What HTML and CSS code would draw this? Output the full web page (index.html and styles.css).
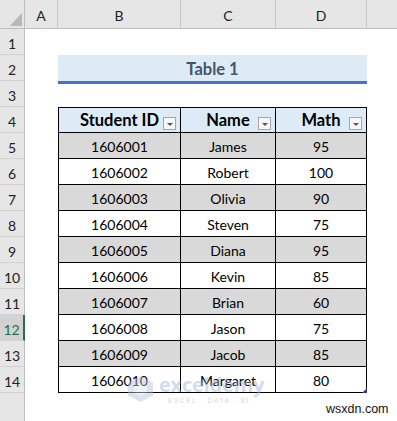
FILE: index.html
```html
<!DOCTYPE html>
<html>
<head>
<meta charset="utf-8">
<link rel="stylesheet" href="styles.css">
</head>
<body>
<div class="sheet">
  <div class="corner"><svg width="25" height="29" viewBox="0 0 25 29"><polygon points="10,26 22,26 22,13" fill="#b7b7b7"/></svg></div>
  <div class="ch">A</div>
  <div class="ch">B</div>
  <div class="ch">C</div>
  <div class="ch">D</div>
  <div class="ch last"></div>

  <div class="rh">1</div><div class="c"></div><div class="c"></div><div class="c"></div><div class="c"></div><div class="c"></div>
  <div class="rh">2</div><div class="c"></div><div class="title-cell"><div class="title">Table 1</div></div><div class="c"></div>
  <div class="rh">3</div><div class="c"></div><div class="c"></div><div class="c"></div><div class="c"></div><div class="c"></div>

  <div class="rh">4</div><div class="c"></div>
  <div class="t hd first top">Student ID<span class="fb"></span></div>
  <div class="t hd top">Name<span class="fb"></span></div>
  <div class="t hd top">Math<span class="fb"></span></div>
  <div class="c"></div>

  <div class="rh">5</div><div class="c"></div><div class="t alt first">1606001</div><div class="t alt">James</div><div class="t alt">95</div><div class="c"></div>
  <div class="rh">6</div><div class="c"></div><div class="t first">1606002</div><div class="t">Robert</div><div class="t">100</div><div class="c"></div>
  <div class="rh">7</div><div class="c"></div><div class="t alt first">1606003</div><div class="t alt">Olivia</div><div class="t alt">90</div><div class="c"></div>
  <div class="rh">8</div><div class="c"></div><div class="t first">1606004</div><div class="t">Steven</div><div class="t">75</div><div class="c"></div>
  <div class="rh">9</div><div class="c"></div><div class="t alt first">1606005</div><div class="t alt">Diana</div><div class="t alt">95</div><div class="c"></div>
  <div class="rh">10</div><div class="c"></div><div class="t first">1606006</div><div class="t">Kevin</div><div class="t">85</div><div class="c"></div>
  <div class="rh">11</div><div class="c"></div><div class="t alt first">1606007</div><div class="t alt">Brian</div><div class="t alt">60</div><div class="c"></div>
  <div class="rh sel">12</div><div class="c"></div><div class="t first">1606008</div><div class="t">Jason</div><div class="t">75</div><div class="c"></div>
  <div class="rh">13</div><div class="c"></div><div class="t alt first">1606009</div><div class="t alt">Jacob</div><div class="t alt">85</div><div class="c"></div>
  <div class="rh">14</div><div class="c"></div><div class="t first">1606010</div><div class="t">Margaret</div><div class="t corner-cell">80<span class="handle"></span></div><div class="c"></div>
  <div class="rh end"></div><div class="c"></div><div class="c"></div><div class="c"></div><div class="c"></div><div class="c"></div>
</div>

<div class="watermark">
  <svg class="wm-logo" width="27" height="28" viewBox="0 0 27 28">
    <polygon points="13.5,1 26,7.5 26,20.5 13.5,27 1,20.5 1,7.5" fill="#b8c2dc"/>
    <polygon points="13.5,8 20,11.5 20,17.5 13.5,21 7,17.5 7,11.5" fill="#dde3f0"/>
  </svg>
  <div class="wm-text">
    <div class="wm-name">exceldemy</div>
    <div class="wm-sub">EXCEL · DATA · BI</div>
  </div>
</div>

<div class="credit">wsxdn.com</div>
</body>
</html>
```

FILE: styles.css
```css
html, body {
  margin: 0;
  padding: 0;
  background: #ffffff;
}

body {
  width: 397px;
  height: 421px;
  overflow: hidden;
  position: relative;
  font-family: Lato, "Liberation Sans", sans-serif;
  color: #000;
}

.sheet {
  display: grid;
  grid-template-columns: 25px 33px 123px 95px 91px 30px;
  grid-template-rows: 29px repeat(14, 26px) 28px;
}

.corner {
  background: #e6e6e6;
  border-right: 1px solid #bdbdbd;
  border-bottom: 1px solid #bdbdbd;
  box-sizing: border-box;
  overflow: hidden;
}
.corner svg { display: block; }

.ch {
  background: #e6e6e6;
  border-right: 1px solid #c8c8c8;
  border-bottom: 1px solid #bdbdbd;
  box-sizing: border-box;
  display: flex;
  align-items: center;
  justify-content: center;
  font-size: 14px;
  color: #222;
  padding-top: 2px;
}
.ch.last { border-right: none; }

.rh {
  background: #e6e6e6;
  border-right: 1px solid #bdbdbd;
  border-bottom: 1px solid #d2d2d2;
  box-sizing: border-box;
  display: flex;
  align-items: center;
  justify-content: center;
  font-size: 14px;
  color: #222;
  padding-top: 3px;
}
.rh.sel {
  background: #d2d2d2;
  color: #217346;
  border-right: 2px solid #217346;
}
.rh.end { border-bottom: none; }

.c { background: #fff; }

.title-cell {
  grid-column: span 3;
  position: relative;
}
.title {
  height: 25px;
  background: #ddebf7;
  border-bottom: 3px solid #4472c4;
  display: flex;
  align-items: center;
  justify-content: center;
  font-weight: 700;
  font-size: 16.5px;
  color: #44546a;
  padding-top: 1px;
  box-sizing: content-box;
}

.t {
  position: relative;
  box-sizing: border-box;
  border-right: 1px solid #000;
  border-bottom: 1px solid #000;
  display: flex;
  align-items: center;
  justify-content: center;
  font-size: 14px;
  padding-top: 2px;
  background: #fff;
}
.t.first { border-left: 1px solid #000; }
.t.top { border-top: 1px solid #000; }
.t.alt { background: #d9d9d9; }
.t.hd {
  background: #ddebf7;
  font-weight: 700;
  font-size: 16.5px;
  padding-top: 0;
}

.fb {
  position: absolute;
  right: 4px;
  bottom: 2px;
  width: 13px;
  height: 13px;
  box-sizing: border-box;
  border: 1px solid #a6a6a6;
  background: #f7f7f7;
}
.fb::after {
  content: "";
  position: absolute;
  left: 3px;
  top: 5px;
  border-left: 3px solid transparent;
  border-right: 3px solid transparent;
  border-top: 3px solid #555;
}

.handle {
  position: absolute;
  right: -1px;
  bottom: -1px;
  width: 0;
  height: 0;
  border-left: 5px solid transparent;
  border-bottom: 5px solid #2f3b8f;
}

.watermark {
  position: absolute;
  left: 127px;
  top: 375px;
  display: flex;
  align-items: flex-start;
  gap: 5px;
  opacity: 0.45;
  pointer-events: none;
}
.wm-logo { display: block; }
.wm-text { display: flex; flex-direction: column; }
.wm-name {
  font-family: "Open Sans", "Liberation Sans", sans-serif;
  font-weight: 700;
  font-size: 20px;
  line-height: 20px;
  color: #9fb1dc;
  letter-spacing: -0.2px;
}
.wm-sub {
  font-family: "Liberation Sans", sans-serif;
  font-size: 6.5px;
  letter-spacing: 1.6px;
  color: #a8a8a8;
  margin-top: 2px;
  margin-left: 9px;
}

.credit {
  position: absolute;
  left: 326px;
  top: 402px;
  font-family: "Liberation Sans", Arial, sans-serif;
  font-size: 12.5px;
  color: #111;
}
```
